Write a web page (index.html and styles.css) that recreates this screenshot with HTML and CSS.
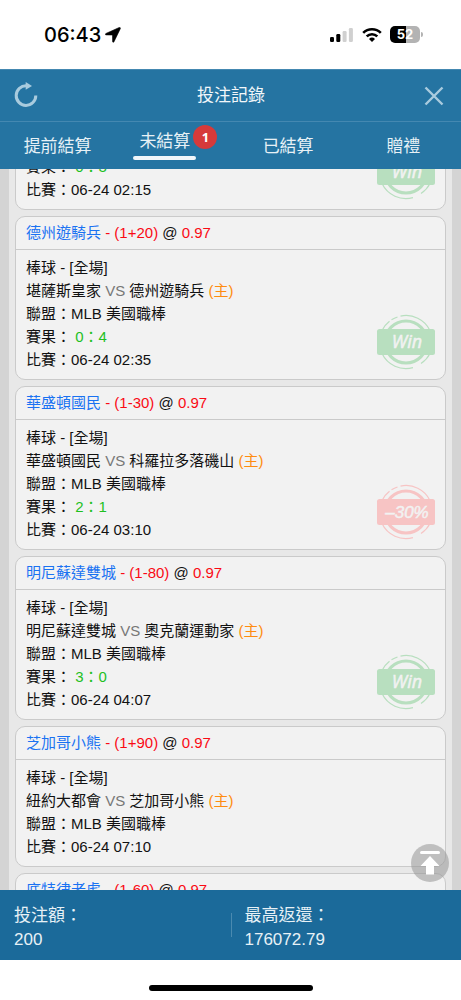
FILE: index.html
```html
<!DOCTYPE html>
<html lang="zh-Hant">
<head>
<meta charset="utf-8">
<meta name="viewport" content="width=device-width, initial-scale=1">
<title>投注記錄</title>
<link rel="stylesheet" href="styles.css">
</head>
<body>
<svg class="defs" aria-hidden="true">
  <symbol id="stamp" viewBox="0 0 60 56">
    <circle cx="30" cy="28" r="21" fill="none" stroke="currentColor" stroke-width="3.200"/>
    <path d="M24.500 2.100A26.500 26.500 0 0 1 54 16.500" fill="none" stroke="currentColor" stroke-width="1.200"/>
    <path d="M15.500 5.800A26.500 26.500 0 0 1 21.500 3M6 16.500A26.500 26.500 0 0 1 13.500 7.300" fill="none" stroke="currentColor" stroke-width="1.200"/>
    <path d="M6 39.500A26.500 26.500 0 0 0 37 53.600M45 49.500A26.500 26.500 0 0 0 54 39.500" fill="none" stroke="currentColor" stroke-width="1.200"/>
    <rect x="1" y="15" width="58" height="26" rx="2.500" fill="currentColor"/>
  </symbol>
</svg>
<div class="app">
  <div class="status">
    <div class="status-left">
      <span class="time">06:43</span>
      <svg width="16" height="16" viewBox="0 0 16 16"><path d="M14.200.5.9 6.500C0 7 .2 7.900 1.200 7.900L7.500 8l.1 6.400c0 1 1 1.200 1.400.3L15.300 1.700C15.700.8 15 .1 14.200.5Z" stroke="#000" stroke-width=".6"/></svg>
    </div>
    <div class="status-right">
      <svg width="24" height="16" viewBox="0 0 24 16"><rect x="0" y="10" width="4" height="5" rx="1.200"/><rect x="6.300" y="7" width="4" height="8" rx="1.200"/><g fill="#d0d0d0"><rect x="12.600" y="4" width="4" height="11" rx="1.200"/><rect x="18.900" y="1" width="4" height="14" rx="1.200"/></g></svg>
      <svg width="20" height="16" viewBox="0 0 20 16"><g fill="none" stroke="#000" stroke-width="2.600"><path d="M1.200 5.900a12.500 12.500 0 0 1 17.600 0"/><path d="M4.700 9.400a7.500 7.500 0 0 1 10.600 0"/></g><path d="M7 11.900a4.300 4.300 0 0 1 6 0l-3 3Z"/></svg>
      <div class="battery"><span>52</span></div>
    </div>
  </div>

  <header class="bar">
    <button class="icon-button" aria-label="重新整理">
      <svg width="24" height="28" viewBox="0 0 24 28"><path d="M12.500 3.800A9.800 9.800 0 1 0 21.800 13.500" fill="none" stroke="currentColor" stroke-width="3"/><path d="M11.700 0v7.800L18 3.900Z" fill="currentColor"/></svg>
    </button>
    <h1>投注記錄</h1>
    <button class="icon-button" aria-label="關閉">
      <svg width="20" height="20" viewBox="0 0 20 20"><path d="M1.500 1.500 18.500 18.500M18.500 1.500 1.500 18.500" fill="none" stroke="currentColor" stroke-width="2.400"/></svg>
    </button>
  </header>

  <nav class="tabs">
    <button>提前結算</button>
    <button class="active"><span class="tab-label">未結算<b class="badge">1</b></span></button>
    <button>已結算</button>
    <button>贈禮</button>
  </nav>

  <main class="stage">
    <div class="list" id="list">
      <article class="card win">
        <div class="details">
          <p>賽果： <span class="score">0：3</span></p>
          <p>比賽：06-24 02:15</p>
        </div>
        <svg class="stamp" viewBox="0 0 60 56"><use href="#stamp"/><text x="31" y="34">Win</text></svg>
      </article>
      <article class="card win">
        <h2><span class="team">德州遊騎兵</span> - (1+20) <span class="at">@</span> 0.97</h2>
        <div class="details">
          <p>棒球 - [全場]</p>
          <p>堪薩斯皇家 <span class="vs">VS</span> 德州遊騎兵 <span class="home">(主)</span></p>
          <p>聯盟：MLB 美國職棒</p>
          <p>賽果： <span class="score">0：4</span></p>
          <p>比賽：06-24 02:35</p>
        </div>
        <svg class="stamp" viewBox="0 0 60 56"><use href="#stamp"/><text x="31" y="34">Win</text></svg>
      </article>
      <article class="card loss">
        <h2><span class="team">華盛頓國民</span> - (1-30) <span class="at">@</span> 0.97</h2>
        <div class="details">
          <p>棒球 - [全場]</p>
          <p>華盛頓國民 <span class="vs">VS</span> 科羅拉多落磯山 <span class="home">(主)</span></p>
          <p>聯盟：MLB 美國職棒</p>
          <p>賽果： <span class="score">2：1</span></p>
          <p>比賽：06-24 03:10</p>
        </div>
        <svg class="stamp" viewBox="0 0 60 56"><use href="#stamp"/><text x="31" y="34">–30%</text></svg>
      </article>
      <article class="card win">
        <h2><span class="team">明尼蘇達雙城</span> - (1-80) <span class="at">@</span> 0.97</h2>
        <div class="details">
          <p>棒球 - [全場]</p>
          <p>明尼蘇達雙城 <span class="vs">VS</span> 奧克蘭運動家 <span class="home">(主)</span></p>
          <p>聯盟：MLB 美國職棒</p>
          <p>賽果： <span class="score">3：0</span></p>
          <p>比賽：06-24 04:07</p>
        </div>
        <svg class="stamp" viewBox="0 0 60 56"><use href="#stamp"/><text x="31" y="34">Win</text></svg>
      </article>
      <article class="card">
        <h2><span class="team">芝加哥小熊</span> - (1+90) <span class="at">@</span> 0.97</h2>
        <div class="details">
          <p>棒球 - [全場]</p>
          <p>紐約大都會 <span class="vs">VS</span> 芝加哥小熊 <span class="home">(主)</span></p>
          <p>聯盟：MLB 美國職棒</p>
          <p>比賽：06-24 07:10</p>
        </div>
      </article>
      <article class="card">
        <h2><span class="team">底特律老虎</span> - (1-60) <span class="at">@</span> 0.97</h2>
      </article>
    </div>
    <button class="to-top" aria-label="回到頂部">
      <svg width="20" height="24" viewBox="0 0 20 24" fill="#fff"><rect x="0" y="0" width="20" height="3" rx="1.500"/><path d="M10 5 19.500 15H14v8.500H6V15H.5Z"/></svg>
    </button>
  </main>

  <footer class="totals">
    <div><span>投注額：</span><span>200</span></div>
    <div><span>最高返還：</span><span>176072.79</span></div>
  </footer>
  <div class="home-area"><div class="home-indicator"></div></div>
</div>
<script src="app.js"></script>
</body>
</html>
```
FILE: styles.css
```css
* {
  box-sizing: border-box;
}

body {
  margin: 0;
  background: #fff;
  color: #111;
  font: 15px/23px "Liberation Sans", "Noto Sans CJK TC", sans-serif;
}

h1, h2, p {
  margin: 0;
  font-weight: 400;
}

button {
  border: 0;
  padding: 0;
  background: none;
  color: inherit;
  font: inherit;
}

svg {
  display: block;
}

.defs {
  position: absolute;
  width: 0;
  height: 0;
}

.app {
  display: flex;
  flex-direction: column;
  height: 100vh;
}

.status {
  display: flex;
  justify-content: space-between;
  align-items: center;
  height: 69px;
  padding: 0 41px 0 44px;
}

.status-left, .status-right {
  display: flex;
  align-items: center;
  gap: 4px;
}

.status-right {
  gap: 8px;
}

.time {
  font: 500 20px/24px Inter, sans-serif;
  color: #000;
}

.battery {
  position: relative;
  width: 30px;
  height: 17px;
  border-radius: 5px;
  background: linear-gradient(90deg, #000 52%, #b3b3b3 52%);
  color: #fff;
  font: 700 13px/17px Inter, sans-serif;
  text-align: center;
}

.battery::after {
  content: "";
  position: absolute;
  top: 6px;
  right: -3px;
  width: 2px;
  height: 5px;
  border-radius: 0 2px 2px 0;
  background: #b3b3b3;
}

.bar {
  display: flex;
  align-items: center;
  justify-content: space-between;
  height: 53px;
  padding: 0 17px 0 14px;
  border-top: 1px solid #4488b1;
  border-bottom: 1px solid #4488b1;
  background: #2574a2;
  color: #f2f7fa;
}

.bar h1 {
  font-size: 17px;
  line-height: 24px;
}

.icon-button {
  display: flex;
  align-items: center;
  color: #a9cbde;
}

.tabs {
  display: grid;
  grid-template-columns: repeat(4, 1fr);
  height: 47px;
  background: #2574a2;
  color: #e7f1f6;
  font-size: 17px;
  line-height: 24px;
}

.tabs button {
  padding-top: 2px;
}

.tabs .active {
  padding: 0 16px 10px 0;
}

.tab-label {
  position: relative;
  display: inline-block;
  padding: 8px 6px 6px;
}

.tab-label::after {
  content: "";
  position: absolute;
  left: 0;
  right: 0;
  bottom: 0;
  height: 4px;
  border-radius: 2px;
  background: #f0f6fa;
}

.badge {
  position: absolute;
  top: 3px;
  right: -21px;
  width: 24px;
  height: 24px;
  border-radius: 50%;
  background: #d63a3a;
  color: #fff;
  font: 700 13px/24px "Noto Sans", sans-serif;
}

.stage {
  position: relative;
  flex: 1;
  min-height: 0;
  padding: 0 9px;
  background: #d4d4d4;
}

.list {
  display: flex;
  flex-direction: column;
  gap: 6px;
  height: 100%;
  padding: 0 6px 6px;
  overflow-y: auto;
  scrollbar-width: none;
  background: #e8e8e8;
}

.card {
  position: relative;
  flex: none;
  border: 1px solid #cacaca;
  border-radius: 10px;
  background: #f2f2f2;
}

.card h2 {
  padding: 4px 10px 5px;
  color: #fa0a14;
  font-size: 15px;
  line-height: 23px;
}

.details {
  padding: 6px 10px 8px;
}

h2 + .details {
  border-top: 1px solid #cacaca;
}

.team {
  color: #1a72f2;
}

.at {
  color: #111;
}

.vs {
  color: #777;
}

.home {
  color: #ff8c0f;
}

.score {
  color: #1fc01f;
}

.stamp {
  position: absolute;
  right: 9px;
  bottom: 9px;
  width: 60px;
  height: 56px;
}

.stamp text {
  fill: #f2f2f2;
  stroke: #f2f2f2;
  stroke-width: 0.5px;
  text-anchor: middle;
  font: italic 400 18px "Open Sans", "Noto Sans", Lato, sans-serif;
}

.win .stamp {
  color: #b8dfbf;
}

.loss .stamp {
  color: #f7c4c4;
}

.loss .stamp text {
  font: italic 17px "Liberation Sans", sans-serif;
}

.to-top {
  position: absolute;
  right: 12px;
  bottom: 8px;
  display: flex;
  align-items: center;
  justify-content: center;
  width: 38px;
  height: 38px;
  border-radius: 50%;
  background: rgba(150, 150, 150, 0.55);
}

.totals {
  display: grid;
  grid-template-columns: 1fr 1fr;
  align-items: center;
  height: 70px;
  padding-top: 6px;
  background: #1b6a9a;
  color: #e7f1f6;
  font-size: 17px;
  line-height: 24px;
}

.totals div {
  position: relative;
  display: flex;
  flex-direction: column;
  padding-left: 14px;
}

.totals div + div::before {
  content: "";
  position: absolute;
  left: 0;
  top: 9px;
  width: 1px;
  height: 24px;
  background: #4a8ab0;
}

.home-area {
  display: flex;
  justify-content: center;
  height: 40px;
  padding-top: 25px;
}

.home-indicator {
  width: 164px;
  height: 6px;
  border-radius: 3px;
  background: #000;
}
```
FILE: app.js
```js
// Open the list a little way down, inside the first record.
document.getElementById("list").scrollTop = 21;
```
